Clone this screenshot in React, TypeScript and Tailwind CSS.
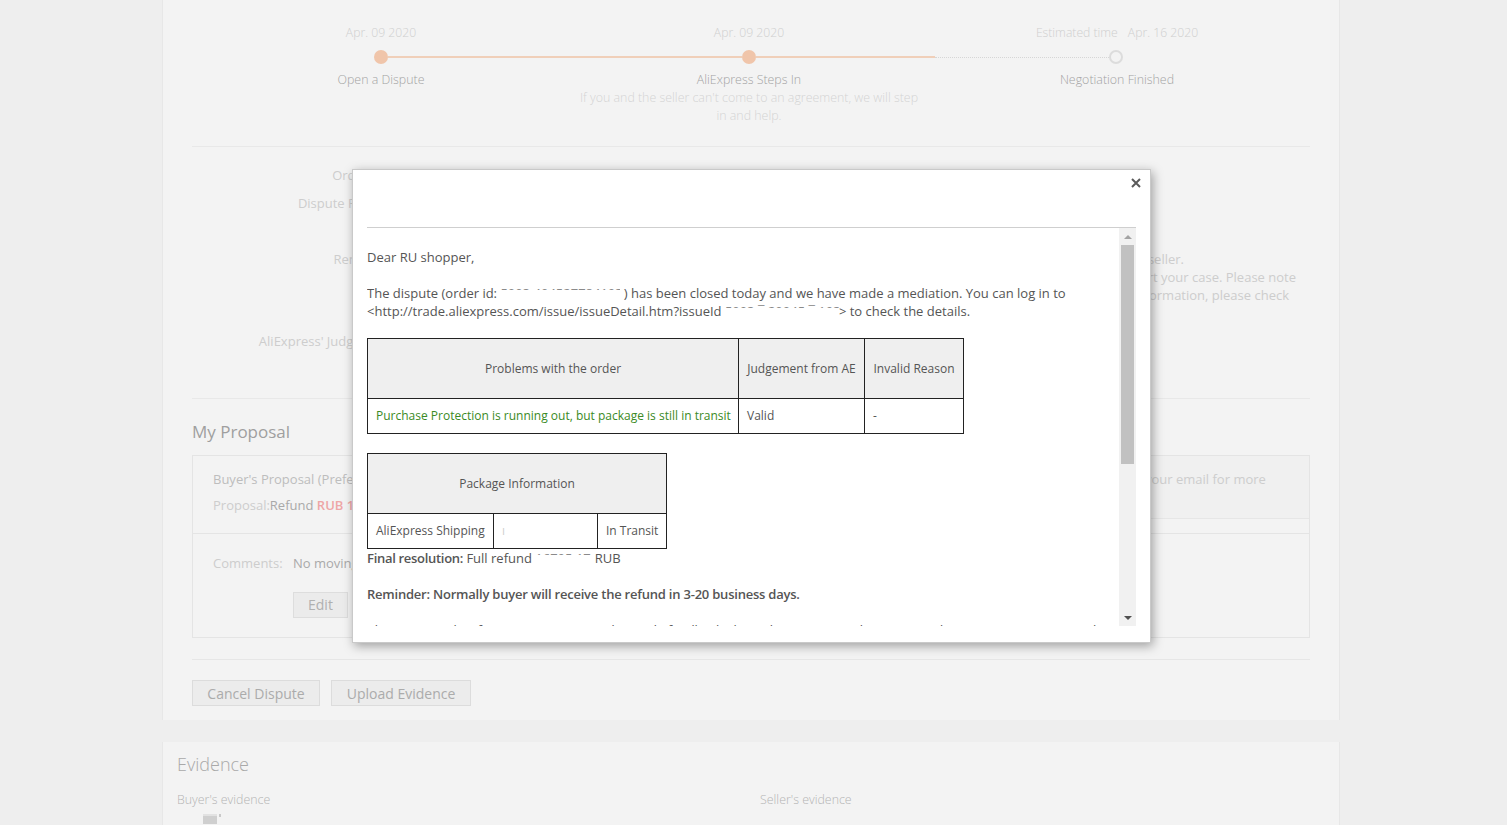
import React from "react";

function Hidden({ children, className }: { children: React.ReactNode; className: string }) {
  // masked value: only the top edge of the characters shows through
  return (
    <span className={"relative inline-block overflow-hidden whitespace-nowrap align-bottom text-[#8a8a8a] " + className}>
      {children}
      <span className="absolute inset-x-0 top-[6px] bottom-0 bg-white" />
    </span>
  );
}

function Timeline() {
  return (
    <div className="font-light">
      <div className="ml-[5px] flex text-[12.2px] leading-[18px] text-[#cfcfcf]">
        <div className="w-[368px] text-center">Apr. 09 2020</div>
        <div className="w-[368px] text-center">Apr. 09 2020</div>
        <div className="w-[368px] text-center">
          Estimated time<span className="ml-[10px]">Apr. 16 2020</span>
        </div>
      </div>
      <div className="mt-[8px] flex h-[14px] items-center">
        <div className="w-[182px]" />
        <div className="h-[14px] w-[14px] rounded-full bg-[#f0c5aa]" />
        <div className="h-[2px] w-[354px] bg-[#f0cfb9]" />
        <div className="h-[14px] w-[14px] rounded-full bg-[#f0c5aa]" />
        <div className="h-[2px] w-[179px] bg-[#f0cfb9]" />
        <div className="w-[174px] border-t border-dotted border-[#d6d6d6]" />
        <div className="h-[14px] w-[14px] rounded-full border-2 border-[#dcdcdc]" />
      </div>
      <div className="ml-[5px] mt-[7px] flex text-[12.4px] leading-[18px]">
        <div className="w-[368px] text-center text-[#a3a3a3]">Open a Dispute</div>
        <div className="w-[368px] text-center">
          <div className="text-[#a3a3a3]">AliExpress Steps In</div>
          <div className="whitespace-nowrap text-[#d3d3d3]">
            If you and the seller can't come to an agreement, we will step
            <br />
            in and help.
          </div>
        </div>
        <div className="w-[368px] text-center text-[#a3a3a3]">Negotiation Finished</div>
      </div>
    </div>
  );
}

function DisputeInfo() {
  return (
    <div className="text-[13px] leading-[18px] text-[#cdcdcd]">
      <div className="mt-[19px] flex">
        <div className="w-[212px] pr-[8px] text-right">Order No.:</div>
        <div className="flex-1 text-[#b5b5b5]">8003 4045 2778 4193</div>
      </div>
      <div className="mt-[10px] flex">
        <div className="w-[212px] pr-[8px] text-right">Dispute Reason:</div>
        <div className="flex-1 text-[#b5b5b5]">Purchase Protection is running out, but package is still in transit</div>
      </div>
      <div className="mt-[38px] flex">
        <div className="w-[212px] pr-[8px] text-right">Reminder:</div>
        <div className="flex-1 whitespace-nowrap">
          <div className="pr-[126px] text-right">AliExpress has stepped in to help you and the seller.</div>
          <div className="pr-[14px] text-right">Please upload evidence to support your case. Please note</div>
          <div className="pr-[21px] text-right">that we will email you about more information, please check</div>
        </div>
      </div>
      <div className="mt-[28px] flex">
        <div className="w-[212px] pr-[8px] text-right">AliExpress' Judgement:</div>
        <div className="flex-1 text-[#b5b5b5]">Full refund</div>
      </div>
    </div>
  );
}

function Proposal() {
  return (
    <div>
      <div className="mt-[21px] text-[17px] leading-[24px] text-[#9f9f9f]">My Proposal</div>
      <div className="mt-[11px] border border-[#e4e4e4] text-[13px] leading-[18px]">
        <div className="flex border-b border-[#e4e4e4]">
          <div className="flex-1 px-[20px] pb-[19px] pt-[14px]">
            <div className="text-[#bdbdbd]">Buyer's Proposal (Preferred)</div>
            <div className="mt-[8px]">
              <span className="text-[#cdcdcd]">Proposal:</span>
              <span className="text-[#a9a9a9]">Refund </span>
              <span className="font-semibold text-[#eea6a6]">RUB 16795.17</span>
            </div>
          </div>
          <div className="h-[63px] w-[179px] border-b border-l border-[#e6e6e6] bg-[#f0f0f0] pl-[14px] pt-[14px] text-[#cdcdcd]">
            your email for more
          </div>
        </div>
        <div className="px-[20px] pb-[19px] pt-[20px]">
          <div className="flex">
            <div className="w-[80px] text-[#cdcdcd]">Comments:</div>
            <div className="text-[#a9a9a9]">No moving tracking for a long time</div>
          </div>
          <button className="ml-[80px] mt-[20px] h-[26px] border border-[#dddddd] bg-[#ebebeb] px-[14px] text-[14px] text-[#b0b0b0]">
            Edit
          </button>
        </div>
      </div>
      <div className="mt-[21px] border-t border-[#e6e6e6]" />
      <div className="mt-[20px] flex gap-[11px] text-[14px]">
        <button className="h-[26px] w-[128px] border border-[#dcdcdc] bg-[#ececec] text-[#ababab]">Cancel Dispute</button>
        <button className="h-[26px] w-[140px] border border-[#dcdcdc] bg-[#ececec] text-[#ababab]">Upload Evidence</button>
      </div>
    </div>
  );
}

function ScrollBar() {
  return (
    <div className="flex w-[17px] flex-col bg-[#f1f1f1]">
      <div className="flex h-[17px] items-center justify-center">
        <div className="h-0 w-0 border-x-[4px] border-b-[4px] border-x-transparent border-b-[#a3a3a3]" />
      </div>
      <div className="mx-[2px] h-[219px] bg-[#c1c1c1]" />
      <div className="flex-1" />
      <div className="flex h-[17px] items-center justify-center">
        <div className="h-0 w-0 border-x-[4px] border-t-[4px] border-x-transparent border-t-[#505050]" />
      </div>
    </div>
  );
}

function Letter() {
  return (
    <div className="flex-1 overflow-hidden pt-[20px] text-[13px] leading-[18px] text-[#555555]">
      <p>Dear RU shopper,</p>
      <p className="mt-[18px]">
        The dispute (order id: <Hidden className="w-[120px]">5003 404527784193</Hidden> ) has been closed today and we
        have made a mediation. You can log in to
        <br />
        &lt;http://trade.aliexpress.com/issue/issueDetail.htm?issueId <Hidden className="w-[114px]">5003 ¯ 20045 ¯ 193</Hidden>&gt; to
        check the details.
      </p>
      <table className="mt-[18px] border-collapse text-[12px] leading-[16px]">
        <tbody>
          <tr className="h-[60px] bg-[#efefef]">
            <td className="w-[371px] border border-[#222] text-center">Problems with the order</td>
            <td className="w-[126px] border border-[#222] text-center">Judgement from AE</td>
            <td className="w-[99px] border border-[#222] text-center">Invalid Reason</td>
          </tr>
          <tr className="h-[35px]">
            <td className="border border-[#222] pl-[8px] text-[#3a8a25]">
              Purchase Protection is running out, but package is still in transit
            </td>
            <td className="border border-[#222] pl-[8px]">Valid</td>
            <td className="border border-[#222] pl-[8px]">-</td>
          </tr>
        </tbody>
      </table>
      <table className="mt-[19px] border-collapse text-[12px] leading-[16px]">
        <tbody>
          <tr className="h-[60px] bg-[#efefef]">
            <td colSpan={3} className="border border-[#222] text-center">Package Information</td>
          </tr>
          <tr className="h-[35px]">
            <td className="w-[126px] whitespace-nowrap border border-[#222] pl-[8px]">AliExpress Shipping</td>
            <td className="w-[104px] border border-[#222] pl-[8px] text-[#cfcfcf]">ı</td>
            <td className="w-[69px] whitespace-nowrap border border-[#222] pl-[8px]">In Transit</td>
          </tr>
        </tbody>
      </table>
      <p>
        <span className="font-semibold tracking-[-0.3px]">Final resolution:</span> Full refund{" "}
        <Hidden className="w-[56px]">16795.17</Hidden> RUB
      </p>
      <p className="mt-[18px] font-semibold tracking-[-0.22px]">
        Reminder: Normally buyer will receive the refund in 3-20 business days.
      </p>
      <p className="mt-[18px]">
        Please remember for starting to rate and provide feedback about the service you have received. We strive to
        continuously improve our service for you.
      </p>
    </div>
  );
}

function MediationDialog() {
  return (
    <div className="absolute left-[352px] top-[169px] flex h-[474px] w-[799px] flex-col border border-[#c9c9c9] bg-white shadow-[2px_3px_10px_rgba(0,0,0,0.35)]">
      <div className="mx-[14px] flex h-[58px] justify-end border-b border-[#cfcfcf] pt-[8px]">
        <svg width="10" height="10" viewBox="0 0 10 10" className="-mr-[5px]">
          <path d="M1 1L9 9M9 1L1 9" stroke="#5a5a5a" strokeWidth="2" />
        </svg>
      </div>
      <div className="mx-[14px] flex h-[398px]">
        <Letter />
        <ScrollBar />
      </div>
    </div>
  );
}

export default function App() {
  return (
    <div className="relative h-[825px] w-[1507px] overflow-hidden bg-[#eeeeee] font-['Open_Sans',sans-serif]">
      <div className="ml-[162px] w-[1178px]">
        <section className="border-x border-[#e7e7e7] bg-[#f3f3f3] px-[29px] pb-[14px] pt-[24px]">
          <Timeline />
          <div className="mt-[21px] border-t border-[#e8e8e8]" />
          <DisputeInfo />
          <div className="mt-[48px] border-t border-[#e8e8e8]" />
          <Proposal />
        </section>
        <section className="mt-[22px] h-[120px] border-x border-[#e7e7e7] bg-[#f3f3f3] px-[14px] pt-[10px]">
          <div className="text-[18px] font-light leading-[24px] text-[#a9a9a9]">Evidence</div>
          <div className="mt-[16px] grid grid-cols-[583px_1fr] text-[12.4px] font-light leading-[16px] text-[#b3b3b3]">
            <div>
              <div>Buyer's evidence</div>
              <div className="ml-[26px] mt-[6px] flex items-start gap-[2px]">
                <div className="h-[10px] w-[14px] border-t-2 border-[#e2e2e2] bg-[#cfcfcf]" />
                <div className="h-[3px] w-[2px] bg-[#c9c9c9]" />
              </div>
            </div>
            <div>Seller's evidence</div>
          </div>
        </section>
      </div>
      <MediationDialog />
    </div>
  );
}
